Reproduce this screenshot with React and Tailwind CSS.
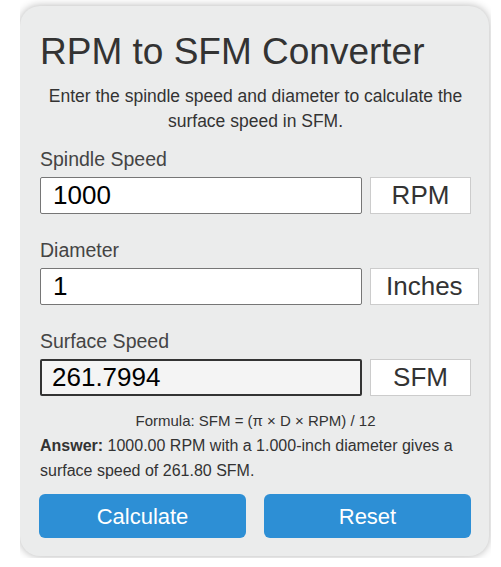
import React from "react";

function Field({ label, value, unit, readOnly }) {
  return (
    <div className="flex flex-col">
      <div className="text-[19.5px] leading-[24px] text-[#444]">{label}</div>
      <div className="mt-[6px] flex items-stretch gap-[8px]">
        <div
          className={
            readOnly
              ? "w-[322px] h-[37px] shrink-0 flex items-center border-2 border-[#333] bg-[#f4f4f4] rounded-[2px] pl-[10px] text-[26px] text-black"
              : "w-[322px] h-[37px] shrink-0 flex items-center border border-[#767676] bg-white rounded-[2px] pl-[12px] text-[26px] text-black"
          }
        >
          {value}
        </div>
        <div className="min-w-[101px] h-[37px] shrink-0 px-[15px] flex items-center justify-center border border-[#ccc] bg-white text-[26px] text-[#333]">
          {unit}
        </div>
      </div>
    </div>
  );
}

export default function App() {
  return (
    <div
      className="bg-white w-[501px] h-[567px]"
      style={{ fontFamily: '"Liberation Sans", Arial, sans-serif' }}
    >
      <div className="ml-[20px] w-[471px] h-[558px] overflow-hidden">
        <div className="mt-[6px] w-[469px] bg-[#ebecec] rounded-[20px] shadow-[0_0_8px_rgba(0,0,0,0.3)] pl-[20px] pr-[18px] pt-[24px] pb-[18px]">
          <h1 className="text-[37px] leading-[44px] text-[#333] font-normal">
            RPM to SFM Converter
          </h1>
          <p className="mt-[10px] text-[17.5px] leading-[25px] text-[#333] text-center">
            Enter the spindle speed and diameter to calculate the surface speed in SFM.
          </p>
          <div className="mt-[13px]">
            <Field label="Spindle Speed" value="1000" unit="RPM" />
          </div>
          <div className="mt-[24px]">
            <Field label="Diameter" value="1" unit="Inches" />
          </div>
          <div className="mt-[24px]">
            <Field label="Surface Speed" value="261.7994" unit="SFM" readOnly />
          </div>
          <div className="mt-[14px] text-[15px] leading-[22px] text-[#333] text-center">
            Formula: SFM = (π × D × RPM) / 12
          </div>
          <p className="mt-[1px] text-[16px] leading-[25px] text-[#333]">
            <span className="font-bold">Answer:</span> 1000.00 RPM with a 1.000-inch diameter gives a surface speed of 261.80 SFM.
          </p>
          <div className="mt-[11px] flex gap-[18px] -ml-px">
            <button className="w-[207px] h-[44px] rounded-[6px] bg-[#2d8fd5] text-white text-[22px]">
              Calculate
            </button>
            <button className="w-[207px] h-[44px] rounded-[6px] bg-[#2d8fd5] text-white text-[22px]">
              Reset
            </button>
          </div>
        </div>
      </div>
    </div>
  );
}
